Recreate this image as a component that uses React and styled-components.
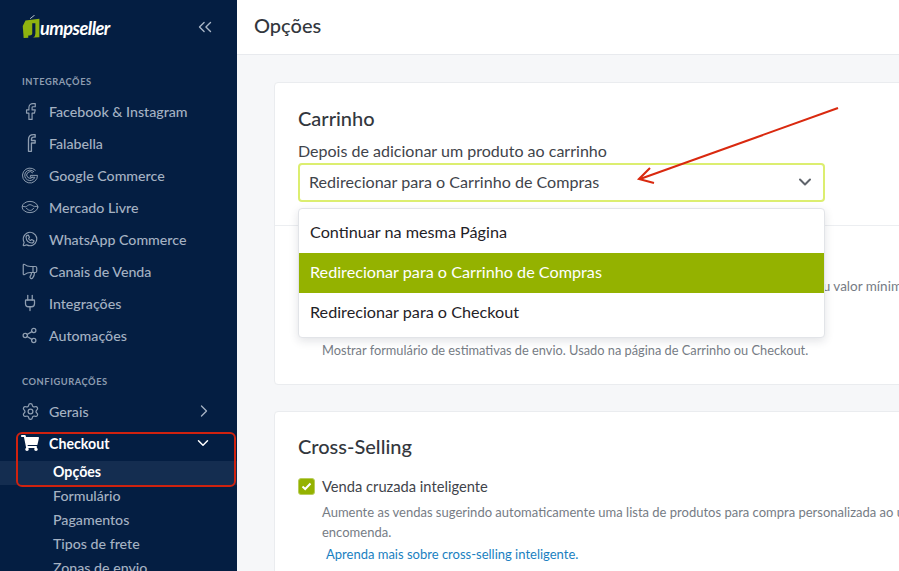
import React from "react";
import styled, { createGlobalStyle } from "styled-components";
import {
  ChevronDown,
  ChevronRight,
  ChevronsLeft,
  Facebook,
  Megaphone,
  Plug,
  Settings,
  Share2,
} from "lucide-react";
import { FaShoppingCart } from "react-icons/fa";
import { PiWhatsappLogo } from "react-icons/pi";

const GlobalStyle = createGlobalStyle`
  html, body {
    margin: 0;
    height: 100%;
    overflow: hidden;
    background: #f6f7f9;
    font-family: Lato, "Open Sans", sans-serif;
  }
  * { box-sizing: border-box; }
`;

const Page = styled.div`
  display: grid;
  grid-template-columns: 237px 1fr;
  height: 571px;
  position: relative;
  overflow: hidden;
`;

const Sidebar = styled.aside`
  background: #041e42;
  overflow: hidden;
  height: 571px;
`;

const Brand = styled.div`
  height: 54px;
  display: flex;
  align-items: center;
  justify-content: space-between;
  padding: 0 21px 0 21px;
  color: #a9b6c6;
`;

const Logo = styled.div`
  display: flex;
  align-items: center;
  color: #fff;
`;

const LogoText = styled.span`
  font-size: 18.2px;
  font-weight: 700;
  font-style: italic;
  letter-spacing: -0.5px;
  margin-left: -2px;
  margin-top: 1px;
`;

const Section = styled.div`
  font-size: 9.3px;
  font-weight: 700;
  letter-spacing: 0.55px;
  color: #8d9cb0;
  padding-left: 22px;
  height: 16px;
  line-height: 16px;
  margin-top: ${(p) => p.$top}px;
  margin-bottom: 6px;
`;

const NavItem = styled.div`
  height: 32px;
  display: flex;
  align-items: center;
  padding: 0 25px 2px 21px;
  font-size: 14.2px;
  font-weight: ${(p) => (p.$active ? 700 : 500)};
  color: ${(p) => (p.$active ? "#fff" : "#a5b2c2")};
`;

const NavIcon = styled.span`
  width: 28px;
  height: 20px;
  display: flex;
  align-items: center;
  color: ${(p) => (p.$active ? "#fff" : "#8f9eb1")};
`;

const NavLabel = styled.span`
  flex: 1;
`;

const GeraisArrow = styled(ChevronRight)`
  margin-right: -2px;
`;

const SubNav = styled.div`
  margin-top: 1px;
`;

const SubItem = styled.div`
  height: 24px;
  line-height: 22px;
  padding-left: 53px;
  font-size: 14.2px;
  font-weight: ${(p) => (p.$active ? 700 : 500)};
  color: ${(p) => (p.$active ? "#fff" : "#a5b2c2")};
  background: ${(p) => (p.$active ? "#142d50" : "transparent")};
`;

const Main = styled.main`
  min-width: 0;
  overflow: hidden;
`;

const Header = styled.header`
  height: 55px;
  background: #fff;
  border-bottom: 1px solid #e8eaee;
  display: flex;
  align-items: center;
  padding: 0 0 5px 17px;
  font-size: 20px;
  font-weight: 500;
  color: #33373d;
`;

const Content = styled.div`
  padding: 27px 0 0 37px;
  width: 860px;
`;

const Card = styled.section`
  background: #fff;
  border: 1px solid #eaecef;
  border-radius: 4px;
  margin-bottom: 26px;
  position: relative;
`;

const CardTop = styled.div`
  padding: 23px 24px 23px 23px;
  border-bottom: 1px solid #eceef1;
  height: 143px;
`;

const CardBody = styled.div`
  height: 158px;
  padding-left: 47px;
  position: relative;
`;

const CardTitle = styled.h2`
  margin: 0;
  font-size: 20px;
  line-height: 24px;
  font-weight: 500;
  color: #33373d;
`;

const FieldLabel = styled.div`
  margin-top: 11px;
  font-size: 16.05px;
  line-height: 20px;
  color: #3f444b;
`;

const Select = styled.div`
  width: 527px;
  height: 39px;
  margin-top: 2px;
  border: 2px solid #dcee70;
  border-radius: 4px;
  display: flex;
  align-items: center;
  justify-content: space-between;
  padding: 0 8px 2px 9px;
  font-size: 16.1px;
  color: #3f444b;
`;

const Menu = styled.div`
  position: absolute;
  left: 23px;
  top: 125px;
  width: 527px;
  height: 130px;
  padding: 4px 0 5px;
  background: #fff;
  border: 1px solid #e2e4e8;
  border-radius: 4px;
  box-shadow: 0 3px 10px rgba(30, 40, 60, 0.13);
  z-index: 2;
`;

const MenuOption = styled.div`
  height: 40px;
  display: flex;
  align-items: center;
  padding: 0 0 3px 11px;
  font-size: 16.2px;
  color: ${(p) => (p.$active ? "#fff" : "#1f2227")};
  background: ${(p) => (p.$active ? "#94b200" : "transparent")};
`;

const HintLine = styled.div`
  font-size: 13px;
  line-height: 20px;
  color: #767c85;
`;

const PeekText = styled(HintLine)`
  position: absolute;
  left: 540px;
  top: 50px;
  font-size: 13.5px;
  white-space: nowrap;
`;

const EstimateHint = styled(HintLine)`
  position: absolute;
  left: 47px;
  top: 114px;
  font-size: 12.8px;
  white-space: nowrap;
`;

const CheckRow = styled.label`
  display: flex;
  align-items: center;
  gap: 7px;
  margin-top: 19px;
  font-size: 14.7px;
  color: #3f444b;
`;

const CheckBox = styled.span`
  width: 17px;
  height: 17px;
  border-radius: 3px;
  background: #94b200;
  border: 1px solid #b9cd5c;
  display: flex;
  align-items: center;
  justify-content: center;
`;

const Details = styled.div`
  padding-left: 24px;
  margin-top: 7px;
  width: 640px;
`;

const HelpLink = styled.a`
  display: block;
  margin: 2px 0 0 4px;
  font-size: 13px;
  line-height: 20px;
  color: #1a7fc1;
  text-decoration: none;
`;

const SecondCard = styled(Card)`
  height: 300px;
  padding: 22px 24px 0 23px;
`;

const Highlight = styled.div`
  position: absolute;
  left: 16px;
  top: 432px;
  width: 220px;
  height: 55px;
  border: 2px solid #d0220f;
  border-radius: 6px;
  z-index: 3;
`;

const ArrowLayer = styled.svg`
  position: absolute;
  left: 620px;
  top: 100px;
  z-index: 3;
`;

const iconSvg = {
  width: 20,
  height: 20,
  viewBox: "0 0 24 24",
  fill: "none",
  stroke: "currentColor",
  strokeWidth: 1.6,
  strokeLinecap: "round",
  strokeLinejoin: "round",
};

const FalabellaIcon = () => (
  <svg {...iconSvg}>
    <path d="M9 22V8c0-3.500 2-6 6-6h2v3h-2c-1.600 0-2.500 1-2.500 3v1H17v3h-4.500v10z" />
  </svg>
);

const GoogleIcon = () => (
  <svg {...iconSvg} width="18" height="18" strokeWidth="1.3">
    <path d="M19 5.500A10 10 0 1 0 22 12.500H12.500v2.500h6a7 7 0 1 1-1.500-7.500" />
    <path d="M15.500 9a4.500 4.500 0 1 0 0 6" />
  </svg>
);

const MercadoIcon = () => (
  <svg {...iconSvg} width="18" height="18" strokeWidth="1.3">
    <ellipse cx="12" cy="12" rx="10.500" ry="7.500" />
    <path d="M2 11c3 1 5 1 7-1 2-1.500 4-1.500 6 0 2 1.500 4 1.500 7 1" />
    <path d="M7 13.500c2 2.500 4 3 5.500 3s3-1 4.500-3" />
  </svg>
);

const LogoTag = () => (
  <svg width="21" height="24" viewBox="0 0 21 26">
    <path d="M4 6 L19 4 L19 24 L2 25 L1 12 Z" fill="#8fb30f" />
    <path d="M9 4 L14 0" stroke="#c8d0d8" strokeWidth="1" fill="none" />
    <path d="M13 9 L13 20 C13 23 10 24 7 24" stroke="#041e42" strokeWidth="3.400" fill="none" />
  </svg>
);

const integrations = [
  { label: "Facebook & Instagram", icon: <Facebook size={19} strokeWidth={1.5} /> },
  { label: "Falabella", icon: <FalabellaIcon /> },
  { label: "Google Commerce", icon: <GoogleIcon /> },
  { label: "Mercado Livre", icon: <MercadoIcon /> },
  { label: "WhatsApp Commerce", icon: <PiWhatsappLogo size={18} /> },
  { label: "Canais de Venda", icon: <Megaphone size={18} strokeWidth={1.6} style={{ transform: "scaleX(-1)" }} /> },
  { label: "Integrações", icon: <Plug size={18} strokeWidth={1.7} /> },
  { label: "Automações", icon: <Share2 size={17} strokeWidth={1.8} /> },
];

const checkoutLinks = ["Opções", "Formulário", "Pagamentos", "Tipos de frete", "Zonas de envio"];

const menuOptions = ["Continuar na mesma Página", "Redirecionar para o Carrinho de Compras", "Redirecionar para o Checkout"];

export default function App() {
  return (
    <Page>
      <GlobalStyle />
      <Sidebar>
        <Brand>
          <Logo>
            <LogoTag />
            <LogoText>umpseller</LogoText>
          </Logo>
          <ChevronsLeft size={22} strokeWidth={1.5} />
        </Brand>
        <Section $top={20}>INTEGRAÇÕES</Section>
        {integrations.map((item) => (
          <NavItem key={item.label}>
            <NavIcon>{item.icon}</NavIcon>
            <NavLabel>{item.label}</NavLabel>
          </NavItem>
        ))}
        <Section $top={22}>CONFIGURAÇÕES</Section>
        <NavItem>
          <NavIcon>
            <Settings size={19} strokeWidth={1.6} />
          </NavIcon>
          <NavLabel>Gerais</NavLabel>
          <GeraisArrow size={20} strokeWidth={1.6} />
        </NavItem>
        <NavItem $active>
          <NavIcon $active>
            <FaShoppingCart size={18} />
          </NavIcon>
          <NavLabel>Checkout</NavLabel>
          <ChevronDown size={18} strokeWidth={2} />
        </NavItem>
        <SubNav>
          {checkoutLinks.map((link, i) => (
            <SubItem key={link} $active={i === 0}>
              {link}
            </SubItem>
          ))}
        </SubNav>
      </Sidebar>

      <Main>
        <Header>Opções</Header>
        <Content>
          <Card>
            <CardTop>
              <CardTitle>Carrinho</CardTitle>
              <FieldLabel>Depois de adicionar um produto ao carrinho</FieldLabel>
              <Select>
                Redirecionar para o Carrinho de Compras
                <ChevronDown size={20} strokeWidth={2.4} color="#5f646b" />
              </Select>
            </CardTop>
            <Menu>
              {menuOptions.map((option, i) => (
                <MenuOption key={option} $active={i === 1}>
                  {option}
                </MenuOption>
              ))}
            </Menu>
            <CardBody>
              <PeekText>ou valor mínimo</PeekText>
              <EstimateHint>Mostrar formulário de estimativas de envio. Usado na página de Carrinho ou Checkout.</EstimateHint>
            </CardBody>
          </Card>
          <SecondCard>
            <CardTitle>Cross-Selling</CardTitle>
            <CheckRow>
              <CheckBox>
                <svg width="11" height="9" viewBox="0 0 11 9">
                  <path d="M1.500 4.500 L4.200 7 L9.500 1.500" stroke="#fff" strokeWidth="2" fill="none" />
                </svg>
              </CheckBox>
              Venda cruzada inteligente
            </CheckRow>
            <Details>
              <HintLine>
                Aumente as vendas sugerindo automaticamente uma lista de produtos para compra personalizada ao u encomenda.
              </HintLine>
              <HelpLink>Aprenda mais sobre cross-selling inteligente.</HelpLink>
            </Details>
          </SecondCard>
        </Content>
      </Main>

      <Highlight />
      <ArrowLayer width="230" height="90" viewBox="620 100 230 90">
        <path d="M838 108 L640 179" stroke="#d9290f" strokeWidth="2.100" fill="none" />
        <path d="M650 168 L639 179 L654 183" stroke="#d9290f" strokeWidth="2.100" fill="none" />
      </ArrowLayer>
    </Page>
  );
}
